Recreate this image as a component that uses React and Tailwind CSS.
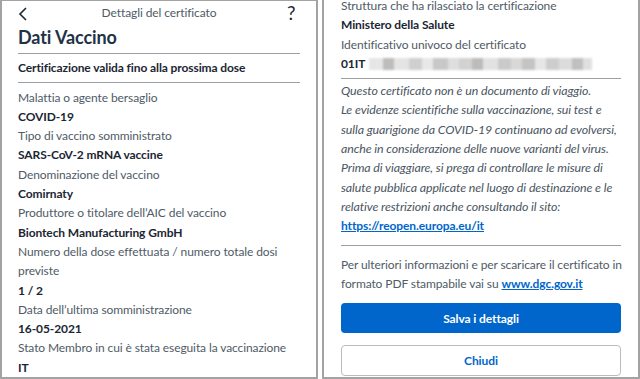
import React from "react";

const font = { fontFamily: "Lato, 'Open Sans', sans-serif" };

function Field({ label, value }) {
  return (
    <div>
      <div className="text-[#4f5b66] whitespace-nowrap">{label}</div>
      <div className="font-bold text-[#1b2633] whitespace-nowrap">{value}</div>
    </div>
  );
}

const blocks = [
  ["#e6e6e6", 14], ["#bdbdbd", 11], ["#e4e4e4", 15], ["#cfcfcf", 13], ["#e8e8e8", 11],
  ["#c8c8c8", 15], ["#dedede", 11], ["#d2d2d2", 13], ["#bcbcbc", 11], ["#e2e2e2", 15],
  ["#cacaca", 13], ["#d8d8d8", 11], ["#c4c4c4", 13], ["#e6e6e6", 11], ["#cdcdcd", 13],
  ["#dcdcdc", 13], ["#c0c0c0", 11], ["#e0e0e0", 9],
];

const italicLines = [
  "Questo certificato non è un documento di viaggio.",
  "Le evidenze scientifiche sulla vaccinazione, sui test e",
  "sulla guarigione da COVID-19 continuano ad evolversi,",
  "anche in considerazione delle nuove varianti del virus.",
  "Prima di viaggiare, si prega di controllare le misure di",
  "salute pubblica applicate nel luogo di destinazione e le",
  "relative restrizioni anche consultando il sito:",
];

export default function App() {
  return (
    <div className="w-[640px] h-[379px] bg-white flex gap-[4px] overflow-hidden" style={font}>
      {/* Left panel */}
      <div className="w-[318px] h-[379px] border-2 border-t-[1px] border-[#a3a3a3] bg-white flex flex-col overflow-hidden text-[12px] tracking-[-0.1px] leading-[19.3px]">
        <div className="relative h-[24px] flex items-center justify-center mt-[1px]">
          <svg className="absolute left-[16px] top-[5px]" width="10" height="14" viewBox="0 0 10 14">
            <path d="M8 1 L2 7 L8 13" fill="none" stroke="#1b2633" strokeWidth="1.6" />
          </svg>
          <span className="text-[12px] text-[#4f5b66]">Dettagli del certificato</span>
          <span className="absolute left-[285px] top-[-1px] text-[19px] leading-[24px] text-[#1b2633]">?</span>
        </div>
        <div className="px-[16px]">
          <div className="text-[18px] leading-[26px] font-bold text-[#1f3347] mt-[1px]">Dati Vaccino</div>
          <div className="h-px bg-[#9aa0a6] mt-[3px]" />
          <div className="font-bold text-[#1b2633] py-[4px] whitespace-nowrap">Certificazione valida fino alla prossima dose</div>
          <div className="h-px bg-[#9aa0a6]" />
          <div className="mt-[5px] flex flex-col">
            <Field label="Malattia o agente bersaglio" value="COVID-19" />
            <Field label="Tipo di vaccino somministrato" value="SARS-CoV-2 mRNA vaccine" />
            <Field label="Denominazione del vaccino" value="Comirnaty" />
            <Field label="Produttore o titolare dell’AIC del vaccino" value="Biontech Manufacturing GmbH" />
            <div className="text-[#4f5b66]">Numero della dose effettuata / numero totale dosi<br />previste</div>
            <div className="font-bold text-[#1b2633]">1 / 2</div>
            <Field label="Data dell’ultima somministrazione" value="16-05-2021" />
            <Field label="Stato Membro in cui è stata eseguita la vaccinazione" value="IT" />
          </div>
        </div>
      </div>

      {/* Right panel */}
      <div className="w-[318px] h-[379px] border-2 border-t-0 border-[#a3a3a3] bg-white overflow-hidden text-[12px] tracking-[-0.1px] leading-[19.3px]">
        <div className="px-[17px] -mt-[4px]">
          <Field label="Struttura che ha rilasciato la certificazione" value="Ministero della Salute" />
          <div>
            <div className="text-[#4f5b66]">Identificativo univoco del certificato</div>
            <div className="flex items-center">
              <span className="font-bold text-[#1b2633]">01IT</span>
              <div className="flex items-center ml-[4px] blur-[1px]">
                {blocks.map(([c, w], i) => (
                  <div key={i} className="h-[12px]" style={{ background: c, width: w }} />
                ))}
              </div>
            </div>
          </div>
          <div className="h-px bg-[#9aa0a6] mt-[5px]" />
          <div className="italic text-[12.4px] text-[#4a5561] mt-[2px] whitespace-nowrap">
            {italicLines.map((l, i) => (
              <div key={i}>{l}</div>
            ))}
          </div>
          <div className="font-bold text-[#0066cc] underline">https://reopen.europa.eu/it</div>
          <div className="h-px bg-[#9aa0a6] mt-[9px]" />
          <div className="text-[#4f5b66] mt-[9px] whitespace-nowrap">
            Per ulteriori informazioni e per scaricare il certificato in<br />
            formato PDF stampabile vai su{" "}
            <span className="font-bold text-[#0066cc] underline">www.dgc.gov.it</span>
          </div>
          <div className="mt-[10px] h-[30px] rounded-[4px] bg-[#0066cc] flex items-center justify-center text-white font-bold">
            Salva i dettagli
          </div>
          <div className="mt-[12px] h-[31px] rounded-[4px] border border-[#b5bcc4] flex items-center justify-center text-[#0066cc] font-bold">
            Chiudi
          </div>
        </div>
      </div>
    </div>
  );
}
